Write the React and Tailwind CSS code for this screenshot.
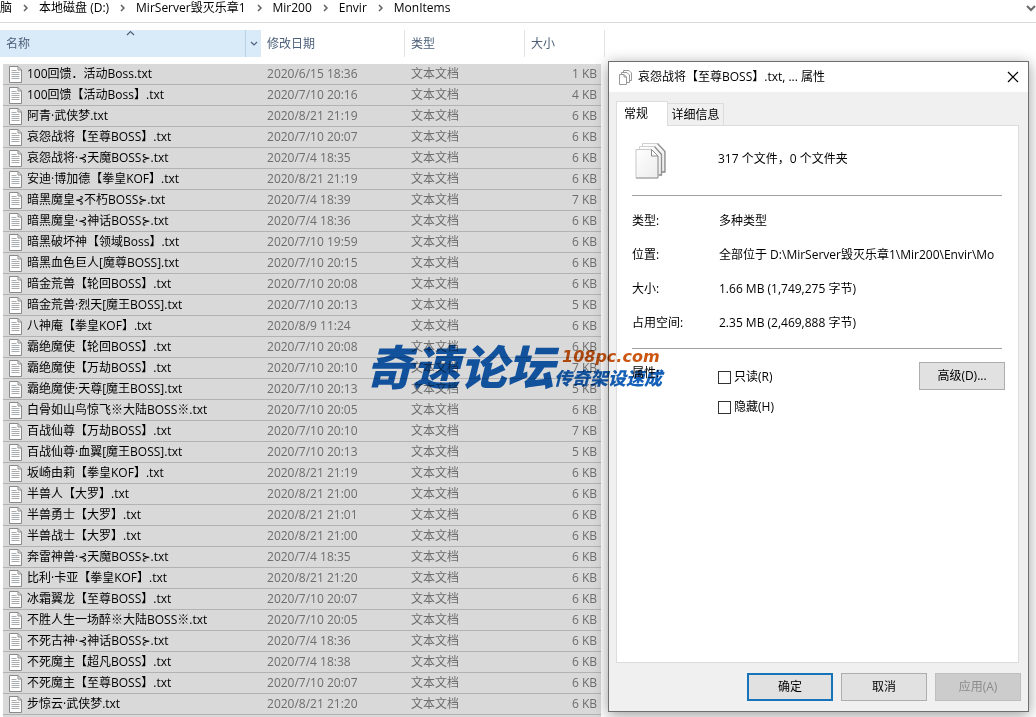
import React, { useState } from "react";
import clsx from "clsx";

const crumbs = ["脑", "本地磁盘 (D:)", "MirServer毁灭乐章1", "Mir200", "Envir", "MonItems"];

const files = [
  ["100回馈．活动Boss.txt", "2020/6/15 18:36", 1],
  ["100回馈【活动Boss】.txt", "2020/7/10 20:16", 4],
  ["阿青·武侠梦.txt", "2020/8/21 21:19", 6],
  ["哀怨战将【至尊BOSS】.txt", "2020/7/10 20:07", 6],
  ["哀怨战将·⊰天魔BOSS⊱.txt", "2020/7/4 18:35", 6],
  ["安迪·博加德【拳皇KOF】.txt", "2020/8/21 21:19", 6],
  ["暗黑魔皇⊰不朽BOSS⊱.txt", "2020/7/4 18:39", 7],
  ["暗黑魔皇·⊰神话BOSS⊱.txt", "2020/7/4 18:36", 6],
  ["暗黑破坏神【领域Boss】.txt", "2020/7/10 19:59", 6],
  ["暗黑血色巨人[魔尊BOSS].txt", "2020/7/10 20:15", 6],
  ["暗金荒兽【轮回BOSS】.txt", "2020/7/10 20:08", 6],
  ["暗金荒兽·烈天[魔王BOSS].txt", "2020/7/10 20:13", 5],
  ["八神庵【拳皇KOF】.txt", "2020/8/9 11:24", 6],
  ["霸绝魔使【轮回BOSS】.txt", "2020/7/10 20:08", 6],
  ["霸绝魔使【万劫BOSS】.txt", "2020/7/10 20:10", 7],
  ["霸绝魔使·天尊[魔王BOSS].txt", "2020/7/10 20:13", 5],
  ["白骨如山鸟惊飞※大陆BOSS※.txt", "2020/7/10 20:05", 6],
  ["百战仙尊【万劫BOSS】.txt", "2020/7/10 20:10", 7],
  ["百战仙尊·血翼[魔王BOSS].txt", "2020/7/10 20:13", 5],
  ["坂崎由莉【拳皇KOF】.txt", "2020/8/21 21:19", 6],
  ["半兽人【大罗】.txt", "2020/8/21 21:00", 6],
  ["半兽勇士【大罗】.txt", "2020/8/21 21:01", 6],
  ["半兽战士【大罗】.txt", "2020/8/21 21:00", 6],
  ["奔雷神兽·⊰天魔BOSS⊱.txt", "2020/7/4 18:35", 6],
  ["比利·卡亚【拳皇KOF】.txt", "2020/8/21 21:20", 6],
  ["冰霜翼龙【至尊BOSS】.txt", "2020/7/10 20:07", 6],
  ["不胜人生一场醉※大陆BOSS※.txt", "2020/7/10 20:05", 6],
  ["不死古神·⊰神话BOSS⊱.txt", "2020/7/4 18:36", 6],
  ["不死魔主【超凡BOSS】.txt", "2020/7/4 18:38", 6],
  ["不死魔主【至尊BOSS】.txt", "2020/7/10 20:07", 6],
  ["步惊云·武侠梦.txt", "2020/8/21 21:20", 6],
];

const details = [
  { label: "类型:", value: "多种类型" },
  { label: "位置:", value: "全部位于 D:\\MirServer毁灭乐章1\\Mir200\\Envir\\Mo" },
  { label: "大小:", value: "1.66 MB (1,749,275 字节)" },
  { label: "占用空间:", value: "2.35 MB (2,469,888 字节)" },
];

const Chevron = ({ d, w, h, className, strokeWidth = 1.2 }) => (
  <svg width={w} height={h} viewBox={`0 0 ${w} ${h}`} className={className} fill="none" stroke="currentColor" strokeWidth={strokeWidth}>
    <path d={d} />
  </svg>
);

const TxtIcon = () => (
  <svg width="13" height="17" viewBox="0 0 13 17" className="shrink-0" fill="none">
    <path d="M.5 .5h8.5l3.5 3.5v12.5H.5z" fill="#fdfdfd" stroke="#8a8a8a" />
    <path d="M9 .5v3.500h3.500" stroke="#8a8a8a" />
    <path d="M2.500 4.500h5M2.500 6.500h8M2.500 8.500h8M2.500 10.500h8M2.500 12.500h8" stroke="#a9adb0" />
  </svg>
);

const SmallFilesIcon = () => (
  <svg width="13" height="15" viewBox="0 0 13 15" fill="#fff" stroke="#8d8d8d" strokeWidth="0.9">
    <path d="M4.500 .5h5.500l2.500 2.500v7.500h-8z" />
    <path d="M2.500 2.500h5.500l2.500 2.500v7.500h-8z" />
    <path d="M.5 4.500h4.500l2.500 2.500v7.500h-7z" />
    <path d="M5 4.500v2.500h2.500" fill="none" />
  </svg>
);

const FilesIcon = () => (
  <svg width="32" height="37" viewBox="0 0 32 37" stroke="#a2a2a2">
    <defs>
      <linearGradient id="paper" x1="0" y1="0" x2="1" y2="1">
        <stop offset="0" stopColor="#fff" />
        <stop offset="1" stopColor="#ececec" />
      </linearGradient>
    </defs>
    <path d="M7.500 1.500h15l7 7v21.500h-22z" fill="url(#paper)" stroke="#d0d0d0" />
    <path d="M22.500 1.500l7.500 8v20.500h-3" fill="none" stroke="#8f8f8f" strokeWidth="1.300" />
    <path d="M4.500 4.500h15l7 7v21.500h-22z" fill="url(#paper)" stroke="#d0d0d0" />
    <path d="M19.500 4.500l7 8v20.500h-3" fill="none" stroke="#8f8f8f" strokeWidth="1.300" />
    <path d="M1 7.500h15.500l6.500 6.500v22H1z" fill="url(#paper)" stroke="#c8c8c8" />
    <path d="M16.500 7.500v6.500H23z" fill="#fff" stroke="#8a8a8a" />
    <path d="M23 14v22H1" fill="none" stroke="#9a9a9a" />
  </svg>
);

const Breadcrumb = () => (
  <nav className="flex h-[23px] items-start justify-between border-b border-[#d9d9d9]">
    <ol className="flex items-center whitespace-nowrap leading-4">
      {crumbs.map((crumb, index) => (
        <li key={crumb} className="flex items-center">
          {index > 0 && (
            <Chevron d="M1 1l3 3-3 3" w={5} h={8} strokeWidth={1.5} className="mx-[11px] text-[#606060]" />
          )}
          <a href="#">{crumb}</a>
        </li>
      ))}
    </ol>
    <button type="button" aria-label="展开" className="pt-[5px]">
      <Chevron d="M1 1l4 4 4-4" w={10} h={7} strokeWidth={2} className="text-[#6a6a6a]" />
    </button>
  </nav>
);

const FileTable = () => (
  <table className="mt-[7px] w-[605px] table-fixed border-separate border-spacing-0 text-left">
    <colgroup>
      <col className="w-[3px]" />
      <col className="w-[258px]" />
      <col className="w-[144px]" />
      <col className="w-[120px]" />
      <col className="w-[76px]" />
      <col className="w-[4px]" />
    </colgroup>
    <thead className="text-[#4c607a]">
      <tr>
        <th colSpan={2} className="pb-[7px] font-normal">
          <div className="relative flex h-[27px] items-center justify-between bg-[#d9ebf9] pl-[6px]">
            名称
            <Chevron d="M1 5l3.500-3.500L8 5" w={9} h={6} className="absolute left-[126px] top-0" />
            <span className="flex h-full w-4 items-center justify-center border-l border-[#b9d3e6]">
              <Chevron d="M1 1l3 3 3-3" w={8} h={6} />
            </span>
          </div>
        </th>
        <th className="pb-[7px] font-normal">
          <div className="flex h-[27px] items-center border-r border-[#e2e2e2] pl-[6px]">修改日期</div>
        </th>
        <th className="pb-[7px] font-normal">
          <div className="flex h-[27px] items-center border-r border-[#e2e2e2] pl-[6px]">类型</div>
        </th>
        <th colSpan={2} className="pb-[7px] font-normal">
          <div className="flex h-[27px] items-center border-r border-[#e2e2e2] pl-[6px]">大小</div>
        </th>
      </tr>
    </thead>
    <tbody>
      {files.map(([name, date, size]) => (
        <tr key={name} className="h-[21px] text-[#6d6d6d]">
          <td />
          <td className="border-b border-[#b2b2b2] bg-[#d9d9d9] pl-[6px]">
            <div className="flex h-5 items-center gap-[5px] whitespace-nowrap text-black">
              <TxtIcon />
              {name}
            </div>
          </td>
          <td className="border-b border-[#b2b2b2] bg-[#d9d9d9] pl-[6px]">{date}</td>
          <td className="border-b border-[#b2b2b2] bg-[#d9d9d9] pl-[6px]">文本文档</td>
          <td className="border-b border-[#b2b2b2] bg-[#d9d9d9] pr-1 text-right">{size} KB</td>
          <td />
        </tr>
      ))}
      <tr className="h-[21px]">
        <td />
        <td colSpan={4} className="bg-[#d9d9d9] pl-[6px]">
          <TxtIcon />
        </td>
        <td />
      </tr>
    </tbody>
  </table>
);

const DialogButton = ({ children, primary, ...rest }) => (
  <button
    type="button"
    className={clsx(
      "h-7 w-[86px] disabled:border-[#bfbfbf] disabled:bg-[#cccccc] disabled:text-[#8b8b8b]",
      primary ? "border-2 border-[#1874b8] bg-[#e1e1e1]" : "border border-[#adadad] bg-[#e1e1e1]"
    )}
    {...rest}
  >
    {children}
  </button>
);

const CheckOption = ({ label, checked, onChange }) => (
  <label className="flex h-[30px] items-center gap-[3px]">
    <input
      type="checkbox"
      checked={checked}
      onChange={onChange}
      className="size-[13px] appearance-none border border-[#333] bg-white checked:bg-[#333]"
    />
    {label}
  </label>
);

const PropertiesDialog = () => {
  const [attrs, setAttrs] = useState({ readOnly: false, hidden: false });

  const toggle = (name) => setAttrs({ ...attrs, [name]: !attrs[name] });

  return (
    <div
      role="dialog"
      className="absolute left-[608px] right-[7px] top-[61px] border border-[#6e6e6e] bg-[#f0f0f0] shadow-[0_3px_14px_rgba(0,0,0,0.4)]"
    >
      <div className="flex h-[30px] items-center bg-white pl-[10px] pr-[9px]">
        <SmallFilesIcon />
        <h2 className="ml-[6px] flex-1">哀怨战将【至尊BOSS】.txt, ... 属性</h2>
        <button type="button" aria-label="关闭">
          <Chevron d="M1 1l10 10M11 1L1 11" w={12} h={12} />
        </button>
      </div>

      <div className="px-[7px] pb-[10px] pt-[9px]">
        <div role="tablist" className="flex items-end">
          <button
            role="tab"
            aria-selected="true"
            className="relative -mb-px h-[25px] w-[52px] border border-b-0 border-[#dcdcdc] bg-white pr-3"
          >
            常规
          </button>
          <button role="tab" aria-selected="false" className="h-[22px] w-[56px] whitespace-nowrap border border-b-0 border-l-0 border-[#dcdcdc]">
            详细信息
          </button>
        </div>

        <div className="mr-[2px] h-[538px] border border-[#dcdcdc] bg-white pl-[15px] pr-4">
          <div className="flex h-[70px] items-center border-b border-[#a0a0a0]">
            <div className="w-[86px] pl-[3px]">
              <FilesIcon />
            </div>
            <p className="pb-1">317 个文件，0 个文件夹</p>
          </div>

          <dl className="border-b border-[#a0a0a0] pb-2 pt-2">
            {details.map(({ label, value }) => (
              <div key={label} className="flex h-[34px] items-center">
                <dt className="w-[87px] shrink-0">{label}</dt>
                <dd className="whitespace-nowrap">{value}</dd>
              </div>
            ))}
          </dl>

          <div className="-mr-[3px] flex items-start pt-[13px]">
            <span className="w-[86px] pt-[3px]">属性:</span>
            <div className="flex-1">
              <CheckOption label="只读(R)" checked={attrs.readOnly} onChange={() => toggle("readOnly")} />
              <CheckOption label="隐藏(H)" checked={attrs.hidden} onChange={() => toggle("hidden")} />
            </div>
            <DialogButton>高级(D)...</DialogButton>
          </div>
        </div>

        <div className="mt-[10px] flex justify-end gap-2">
          <DialogButton primary>确定</DialogButton>
          <DialogButton>取消</DialogButton>
          <DialogButton disabled>应用(A)</DialogButton>
        </div>
      </div>
    </div>
  );
};

// forum stamp laid over both windows
const Watermark = () => (
  <div className="pointer-events-none absolute left-[366px] top-[340px] flex items-center whitespace-nowrap font-['Noto_Sans_CJK_SC',sans-serif] font-black italic text-[#1560b8] mix-blend-multiply">
    <span className="text-[47px] leading-[50px]">奇速论坛</span>
    <span className="flex flex-col pt-2">
      <span className="pl-2 font-['DejaVu_Sans',sans-serif] text-base font-bold leading-4 text-[#cc5510]">108pc.com</span>
      <span className="text-lg leading-6">传奇架设速成</span>
    </span>
  </div>
);

export default function App() {
  return (
    <main className="relative h-screen overflow-hidden bg-white font-['Open_Sans','Noto_Sans_CJK_SC','DejaVu_Sans_Condensed',sans-serif] text-xs text-black">
      <Breadcrumb />
      <FileTable />
      <PropertiesDialog />
      <Watermark />
    </main>
  );
}
